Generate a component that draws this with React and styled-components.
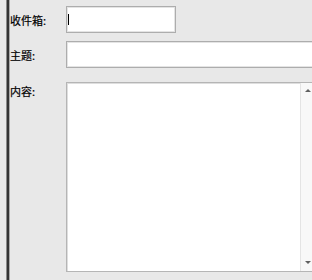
import React from "react";
import styled, { createGlobalStyle } from "styled-components";

const Global = createGlobalStyle`
  html, body { margin: 0; padding: 0; }
  body {
    background: #e8e8e8;
    overflow: hidden;
    font-family: "Noto Sans CJK SC", "Noto Sans", sans-serif;
  }
`;

const Page = styled.div`
  display: flex;
  width: 312px;
  height: 280px;
  overflow: hidden;
  background: #e8e8e8;
`;

const Splitter = styled.div`
  margin-left: 6px;
  width: 4px;
  flex: none;
  border-left: 1px solid #8a8a8a;
  border-right: 1px solid #a8a8a8;
  background: #333;
  box-sizing: border-box;
`;

const Form = styled.div`
  display: grid;
  grid-template-columns: 56px 1fr;
  grid-template-rows: 27px 27px 190px;
  row-gap: 8px;
  padding-top: 6px;
  width: 304px;
  flex: none;
  & > :nth-child(5),
  & > :nth-child(6) {
    margin-top: 6px;
  }
`;

const Label = styled.div`
  font-size: 11px;
  line-height: 14px;
  color: #000;
  align-self: ${(p) => (p.$top ? "start" : "center")};
  padding-top: ${(p) => (p.$top ? "2px" : "0")};
  white-space: nowrap;
  -webkit-text-stroke: 0.2px #000;
`;

const Field = styled.div`
  box-sizing: border-box;
  height: 27px;
  width: ${(p) => (p.$w ? `${p.$w}px` : "calc(100% + 4px)")};
  background: #fff;
  border: 1px solid #adadad;
  box-shadow: inset 0 0 0 1px #e4e4e4;
  display: flex;
  align-items: center;
  padding-left: 1px;
`;

const Caret = styled.span`
  display: block;
  width: 1px;
  height: 11px;
  background: #000;
`;

const Area = styled.div`
  box-sizing: border-box;
  width: calc(100% + 4px);
  height: 190px;
  background: #fff;
  border: 1px solid #b5b5b5;
  box-shadow: inset 1px 1px 0 #dedede;
  display: flex;
  justify-content: flex-end;
`;

const ScrollTrack = styled.div`
  width: 14px;
  margin-right: 2px;
  border-left: 1px solid #e4e4e4;
  background: #f8f8f8;
  display: flex;
  flex-direction: column;
  justify-content: space-between;
  align-items: center;
  padding: 6px 0 7px;
`;

const Arrow = styled.span`
  width: 0;
  height: 0;
  border-left: 3px solid transparent;
  border-right: 3px solid transparent;
  ${(p) =>
    p.$down
      ? "border-top: 3px solid #606060;"
      : "border-bottom: 3px solid #606060;"}
`;

export default function App() {
  return (
    <>
      <Global />
      <Page>
        <Splitter />
        <Form>
          <Label>收件箱:</Label>
          <Field $w={110}>
            <Caret />
          </Field>
          <Label>主题:</Label>
          <Field />
          <Label $top>内容:</Label>
          <Area>
            <ScrollTrack>
              <Arrow />
              <Arrow $down />
            </ScrollTrack>
          </Area>
        </Form>
      </Page>
    </>
  );
}
